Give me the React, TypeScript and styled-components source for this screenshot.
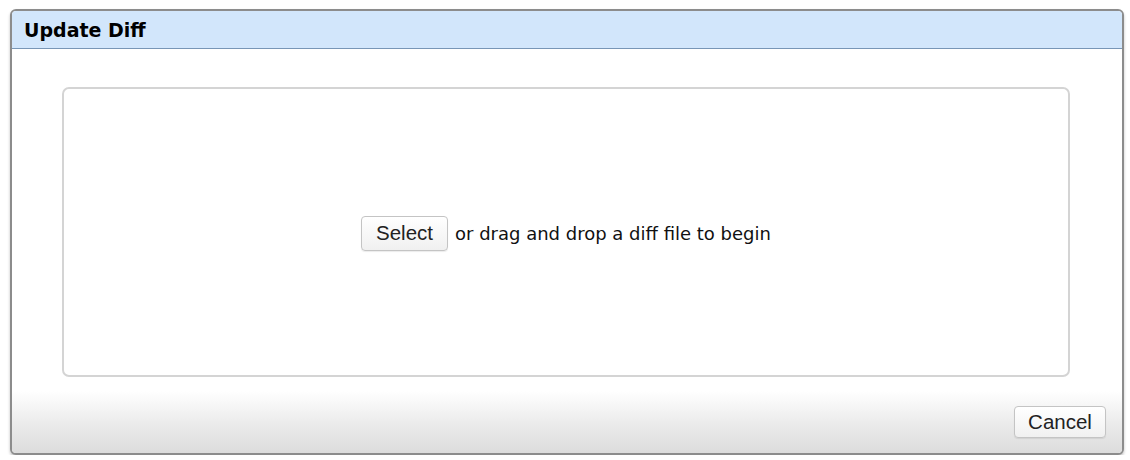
import React from 'react';
import styled, { createGlobalStyle } from 'styled-components';

const GlobalStyle = createGlobalStyle`
    html, body {
        margin: 0;
        padding: 0;
        background: #ffffff;
    }
`;

const Page = styled.div`
    padding: 9px 0 0 10px;
`;

const Dialog = styled.div`
    width: 1114px;
    height: 446px;
    box-sizing: border-box;
    border: 2px solid #8c8c8c;
    border-radius: 6px;
    box-shadow: 0 2px 3px rgba(0, 0, 0, 0.25);
    display: flex;
    flex-direction: column;
    overflow: hidden;
    background: #ffffff;
`;

const Header = styled.div`
    height: 37px;
    flex: none;
    background: #d2e6fb;
    border-bottom: 1px solid #7896b6;
    display: flex;
    align-items: center;
    padding-left: 12px;
    font-family: "DejaVu Sans", Verdana, sans-serif;
    font-weight: bold;
    font-size: 19px;
    color: #000000;
`;

const Body = styled.div`
    flex: 1;
    padding: 38px 52px 0 50px;
    display: flex;
    flex-direction: column;
`;

const DropZone = styled.div`
    height: 290px;
    box-sizing: border-box;
    border: 2px solid #d4d4d4;
    border-radius: 7px;
    display: flex;
    align-items: center;
    justify-content: center;
    gap: 7px;
    padding-top: 2px;
`;

const Button = styled.button<{ $w: number; $h: number }>`
    width: ${p => p.$w}px;
    height: ${p => p.$h}px;
    box-sizing: border-box;
    border: 1px solid #c4c4c4;
    border-radius: 4px;
    background: linear-gradient(#ffffff, #f0f0f0);
    box-shadow: 0 1px 1px rgba(0, 0, 0, 0.08);
    font-family: "Liberation Sans", Arial, sans-serif;
    font-size: 20.5px;
    color: #222222;
    padding: 0;
`;

const Hint = styled.span`
    font-family: "DejaVu Sans", Verdana, sans-serif;
    font-size: 18px;
    color: #111111;
`;

const Footer = styled.div`
    height: 62px;
    flex: none;
    background: linear-gradient(#ffffff 0%, #ececec 50%, #dcdcdc 100%);
    display: flex;
    justify-content: flex-end;
    align-items: flex-start;
    padding: 15px 16px 0 0;
    box-sizing: border-box;
`;

const App: React.FC = () => {
    return (
        <Page>
            <GlobalStyle />
            <Dialog>
                <Header>Update Diff</Header>
                <Body>
                    <DropZone>
                        <Button $w={87} $h={35}>Select</Button>
                        <Hint>or drag and drop a diff file to begin</Hint>
                    </DropZone>
                </Body>
                <Footer>
                    <Button $w={92} $h={32}>Cancel</Button>
                </Footer>
            </Dialog>
        </Page>
    );
};

export default App;
